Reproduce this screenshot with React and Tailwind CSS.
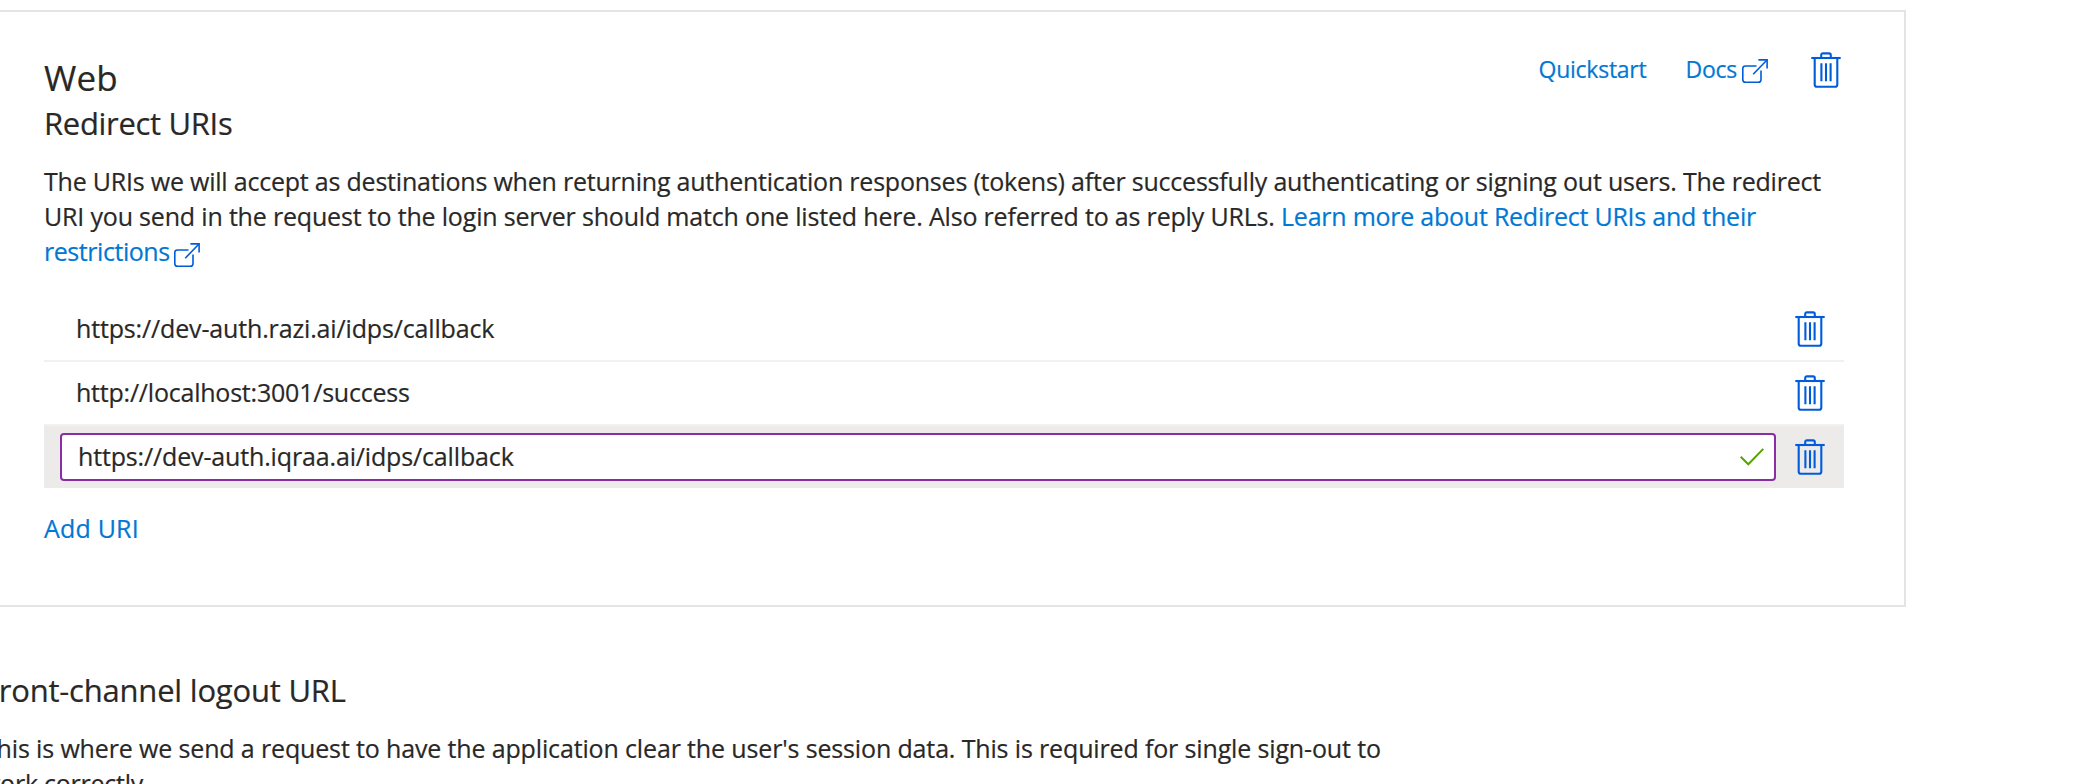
function TrashIcon() {
  return (
    <svg className="block h-9 w-[30px] shrink-0" viewBox="0 0 30 36" fill="none" stroke="#015cda" strokeWidth="2.1">
      <path d="M0.3 6H29.7" />
      <path d="M10.2 5.6V3.2C10.2 2 10.8 1.4 12 1.4H18C19.2 1.4 19.8 2 19.8 3.2V5.6" />
      <path d="M3.7 6V32.4C3.7 33.9 4.5 34.7 6 34.7H24C25.5 34.7 26.3 33.9 26.3 32.4V6" />
      <path d="M10.4 11.3V29.3M15 11.3V29.3M19.6 11.3V29.3" />
    </svg>
  );
}

function ExternalIcon({ className }) {
  return (
    <svg className={className} viewBox="0 0 26 24" fill="none" stroke="#015cda" strokeWidth="1.6">
      <path d="M14.5 7H3.4C1.6 7 0.8 7.9 0.8 9.6V20.4C0.8 22.3 1.7 23.2 3.4 23.2H16.4C18.1 23.2 19 22.3 19 20.4V11.5" />
      <path d="M11.2 15.2L25 1" />
      <path d="M16.4 0.9H25.1V9.4" />
    </svg>
  );
}

function UriRow({ children }) {
  return (
    <div className="flex h-16 items-center justify-between border-b-2 border-[#f2f1f1] pr-[19px] pl-8">
      {children}
      <TrashIcon />
    </div>
  );
}

export default function App() {
  return (
    <div className="h-[784px] w-[2084px] overflow-hidden bg-white pt-2.5 font-['Open_Sans','Noto_Sans',sans-serif] text-[25px] leading-[35px] text-[#292827] [-webkit-text-stroke:0.2px]">
      <section className="-ml-4 h-[597px] w-[1922px] border-2 border-[#e4e4e4] pt-[42px] pr-[60px] pl-[58px]">
        <header className="flex items-start justify-between pr-[3px]">
          <div>
            <h1 className="pt-px text-[35px] leading-[46px] tracking-[0.1px]">Web</h1>
            <h2 className="-mt-px text-[31px] leading-[46px] tracking-[-0.32px]">Redirect URIs</h2>
          </div>
          <div className="-mt-0.5 flex h-9 items-center text-[23px] text-[#0078d4]">
            <a className="mr-[39px] pb-0.5 tracking-[-0.25px]">Quickstart</a>
            <a className="pb-0.5 tracking-[-0.25px]">Docs</a>
            <ExternalIcon className="mt-0.5 mr-[43px] ml-[5px] h-6 w-[26px]" />
            <TrashIcon />
          </div>
        </header>

        <p className="mt-[18px] whitespace-nowrap">
          <span className="tracking-[-0.214px]">
            The URIs we will accept as destinations when returning authentication responses (tokens) after successfully authenticating or signing out users. The redirect
          </span>
          <br />
          <span className="tracking-[-0.178px]">
            URI you send in the request to the login server should match one listed here. Also referred to as reply URLs.{" "}
          </span>
          <a className="tracking-[-0.24px] text-[#0078d4]">Learn more about Redirect URIs and their</a>
          <br />
          <a className="tracking-[-0.45px] text-[#0078d4]">
            restrictions
            <ExternalIcon className="ml-[4px] inline-block h-6 w-[26px] align-[-6px]" />
          </a>
        </p>

        <div className="mt-[29px]">
          <UriRow>
            <span className="pb-0.5 tracking-[-0.15px]">https://dev-auth.razi.ai/idps/callback</span>
          </UriRow>
          <UriRow>
            <span className="pb-0.5 tracking-[-0.22px]">http://localhost:3001/success</span>
          </UriRow>
          <div className="flex h-[62px] items-center justify-between bg-[#edebe9] pr-[19px] pl-4">
            <div className="flex h-12 w-[1716px] items-center justify-between rounded border-2 border-[#8a2da5] bg-white pr-2.5 pl-4">
              <span className="pb-0.5 tracking-[-0.15px]">https://dev-auth.iqraa.ai/idps/callback</span>
              <svg className="h-[18px] w-6" viewBox="0 0 24 18" fill="none" stroke="#57a300" strokeWidth="2">
                <path d="M0.7 8.7L8.3 16.3L23.3 0.9" />
              </svg>
            </div>
            <TrashIcon />
          </div>
        </div>

        <a className="mt-[22px] block leading-9 tracking-[0.2px] text-[#0078d4]">Add URI</a>
      </section>

      <section className="-ml-[17px] pt-[60px] whitespace-nowrap">
        <h2 className="text-[31px] leading-[46px] tracking-[-0.21px]">Front-channel logout URL</h2>
        <p className="mt-[18px] tracking-[-0.145px]">
          This is where we send a request to have the application clear the user's session data. This is required for single sign-out to
          <br />
          <span className="-ml-0.5 tracking-[-0.25px]">work correctly.</span>
        </p>
      </section>
    </div>
  );
}
